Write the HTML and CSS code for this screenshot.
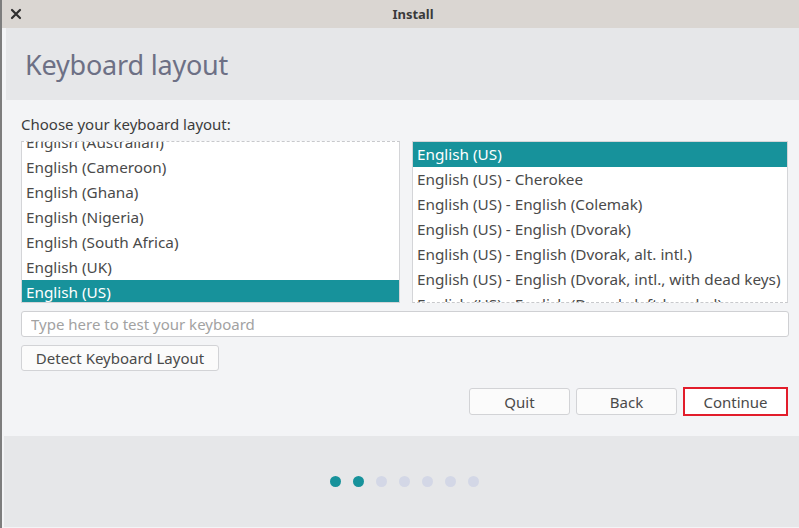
FILE: index.html
```html
<!DOCTYPE html>
<html>
<head>
<meta charset="utf-8">
<link rel="stylesheet" href="styles.css">
</head>
<body>
<div class="window">
  <div class="titlebar">
    <span class="close">
      <svg width="12" height="12" viewBox="0 0 12 12"><path d="M2 2 L10 10 M10 2 L2 10" stroke="#2e2e2e" stroke-width="2.2" stroke-linecap="round"/></svg>
    </span>
    <span class="title">Install</span>
  </div>
  <div class="header"><h1>Keyboard layout</h1></div>
  <div class="content">
    <div class="prompt">Choose your keyboard layout:</div>
    <div class="lists">
      <div class="list left">
        <div class="items shift-left">
          <div class="item">English (Australian)</div>
          <div class="item">English (Cameroon)</div>
          <div class="item">English (Ghana)</div>
          <div class="item">English (Nigeria)</div>
          <div class="item">English (South Africa)</div>
          <div class="item">English (UK)</div>
          <div class="item sel">English (US)</div>
        </div>
      </div>
      <div class="list right">
        <div class="items">
          <div class="item sel">English (US)</div>
          <div class="item">English (US) - Cherokee</div>
          <div class="item">English (US) - English (Colemak)</div>
          <div class="item">English (US) - English (Dvorak)</div>
          <div class="item">English (US) - English (Dvorak, alt. intl.)</div>
          <div class="item">English (US) - English (Dvorak, intl., with dead keys)</div>
          <div class="item">English (US) - English (Dvorak, left-handed)</div>
        </div>
      </div>
    </div>
    <input class="test" type="text" placeholder="Type here to test your keyboard">
    <div class="detect-row"><button class="btn detect">Detect Keyboard Layout</button></div>
    <div class="actions">
      <button class="btn nav">Quit</button>
      <button class="btn nav">Back</button>
      <button class="btn nav continue">Continue</button>
    </div>
  </div>
  <div class="footer">
    <div class="dots">
      <span class="dot on"></span><span class="dot on"></span><span class="dot"></span><span class="dot"></span><span class="dot"></span><span class="dot"></span><span class="dot"></span>
    </div>
  </div>
</div>
</body>
</html>
```
FILE: styles.css
```css
html, body {
  margin: 0;
  padding: 0;
  width: 799px;
  height: 528px;
  overflow: hidden;
  background: #f3f4f6;
  font-family: "Noto Sans", "Open Sans", sans-serif;
}
.window {
  height: 528px;
  border-left: 2px solid #7d7d7d;
  box-sizing: border-box;
  display: flex;
  flex-direction: column;
  background: #f3f4f6;
}
.titlebar {
  height: 28px;
  flex: none;
  background: #dad6d2;
  display: flex;
  align-items: center;
  justify-content: center;
  position: relative;
}
.close {
  position: absolute;
  left: 8px;
  top: 8px;
  width: 12px;
  height: 12px;
  display: flex;
}
.title {
  font-size: 13px;
  font-weight: bold;
  color: #3a3a3a;
  margin-left: 25px;
}
.header {
  height: 72px;
  flex: none;
  margin-left: 4px;
  background: #e6e7e9;
  display: flex;
  align-items: center;
}
.header h1 {
  margin: 0 0 0 19px;
  font-weight: normal;
  font-size: 27px;
  color: #6d7085;
  letter-spacing: -0.2px;
}
.content {
  height: 336px;
  flex: none;
  padding: 15px 11px 0 19px;
  box-sizing: border-box;
  display: flex;
  flex-direction: column;
}
.prompt {
  font-size: 15px;
  color: #3c3c3c;
  height: 18px;
  line-height: 18px;
  margin-bottom: 8px;
}
.lists {
  display: flex;
  gap: 12px;
  height: 162px;
}
.list {
  background: #fff;
  border: 1px solid #d4d5d8;
  box-sizing: border-box;
  height: 162px;
  overflow: hidden;
  position: relative;
}
.list.left { width: 379px; border-top: 1px dashed #c8c9cc; }
.list.right { width: 376px; border-bottom: 1px dashed #c8c9cc; }
.items.shift-left { margin-top: -12px; }
.item {
  height: 25px;
  line-height: 25px;
  padding-left: 4px;
  font-size: 15.3px;
  color: #4a4a4a;
  white-space: nowrap;
}
.item.sel {
  background: #17929b;
  color: #ffffff;
}
.test {
  margin-top: 8px;
  height: 26px;
  box-sizing: border-box;
  width: 768px;
  border: 1px solid #cfd0d3;
  border-radius: 3px;
  background: #fff;
  padding: 0 9px;
  font-family: inherit;
  font-size: 15px;
  outline: none;
}
.test::placeholder { color: #a2a2a2; }
.detect-row { margin-top: 8px; display: flex; }
.btn {
  font-family: inherit;
  font-size: 15px;
  color: #4a4a4a;
  background: #fbfbfb;
  border: 1px solid #d2d3d6;
  border-radius: 3px;
  height: 27px;
  box-sizing: border-box;
  padding: 0;
}
.detect { width: 198px; height: 26px; }
.actions {
  margin-top: 17px;
  display: flex;
  justify-content: flex-end;
  gap: 6px;
}
.nav { width: 101px; }
.continue {
  width: 105px;
  height: 29px;
  margin-top: -1px;
  border: 2px solid #e21d2b;
  border-radius: 0;
  background: #ffffff;
}
.footer {
  flex: 1;
  margin-left: 2px;
  margin-bottom: 1px;
  background: #e6e7e9;
  display: flex;
  align-items: center;
  justify-content: center;
}
.dots {
  display: flex;
  gap: 12px;
  margin-left: 6px;
}
.dot {
  width: 11px;
  height: 11px;
  border-radius: 50%;
  background: #d3d7e6;
}
.dot.on { background: #17929b; }
```
